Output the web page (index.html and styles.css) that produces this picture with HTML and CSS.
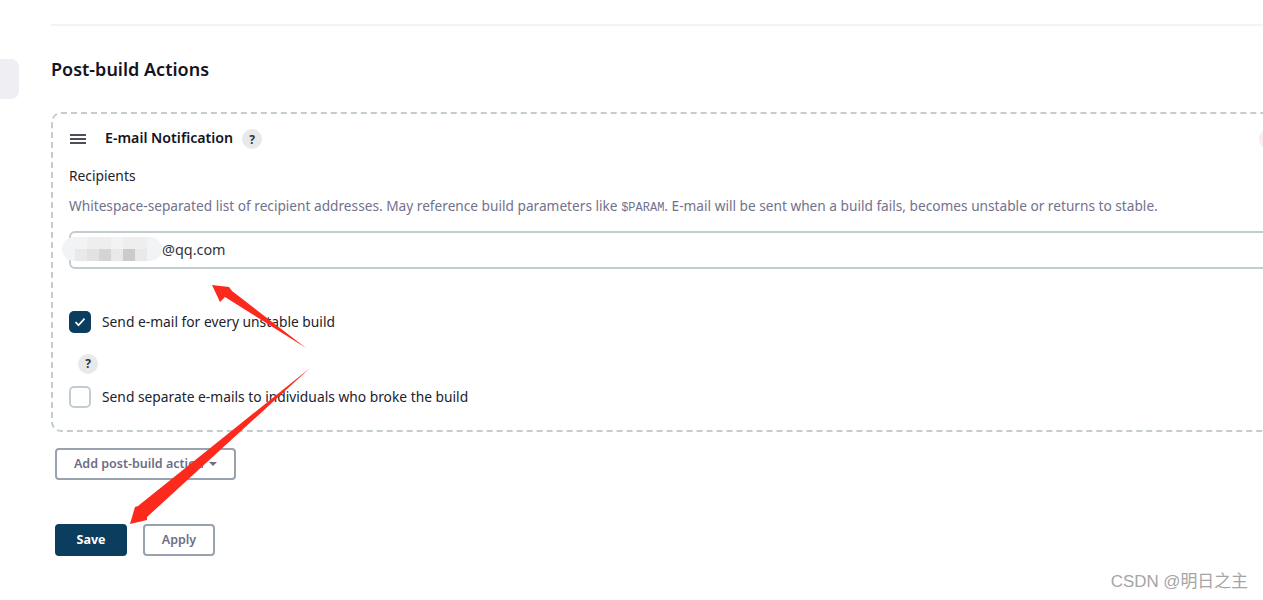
FILE: index.html
```html
<!DOCTYPE html>
<html lang="en">
<head>
<meta charset="utf-8">
<title>Post-build Actions</title>
<link rel="stylesheet" href="styles.css">
</head>
<body>
<div class="page">
  <aside class="side"><div class="side-tab"></div></aside>
  <main class="main">
    <hr class="rule">
    <h2 class="section-title">Post-build Actions</h2>
    <section class="card">
      <div class="card-head">
        <svg class="handle" width="16" height="10" viewBox="0 0 16 10"><path d="M0 1h16M0 5h16M0 9h16" stroke="#14141f" stroke-width="1.4" fill="none"/></svg>
        <span class="card-title">E-mail Notification</span>
        <span class="help">?</span>
        <span class="close-dot"></span>
      </div>
      <label class="field-label">Recipients</label>
      <p class="desc">Whitespace-separated list of recipient addresses. May reference build parameters like <code class="mono">$PARAM</code>. E-mail will be sent when a build fails, becomes unstable or returns to stable.</p>
      <div class="input-wrap">
        <div class="text-input">@qq.com</div>
        <div class="blur" aria-hidden="true">
          <i></i><i></i><i class="p0"></i><i class="p0"></i><i></i><i class="p0"></i><i class="p0"></i><i></i>
          <i></i><i class="p1"></i><i class="p2"></i><i class="p3"></i><i class="p1"></i><i class="p4"></i><i class="p1"></i><i></i>
        </div>
      </div>
      <div class="check-row first">
        <span class="box on"><svg width="12" height="10" viewBox="0 0 12 10"><path d="M1.5 5.2 4.5 8.2 10.5 1.6" fill="none" stroke="#fff" stroke-width="1.7"/></svg></span>
        <span>Send e-mail for every unstable build</span>
      </div>
      <div class="help-row"><span class="help">?</span></div>
      <div class="check-row">
        <span class="box"></span>
        <span>Send separate e-mails to individuals who broke the build</span>
      </div>
    </section>
    <button class="btn add"><span class="btn-text">Add post-build action <span class="caret"></span></span></button>
    <div class="actions">
      <button class="btn primary"><span class="btn-text">Save</span></button>
      <button class="btn apply"><span class="btn-text">Apply</span></button>
    </div>
  </main>
</div>
<svg class="arrows" width="1263" height="600" viewBox="0 0 1263 600" aria-hidden="true">
  <polygon fill="#fc2a1c" points="306,348 232,291 229,287 212,285 220,302 225,297"/>
  <polygon fill="#fc2a1c" points="310,368 147,517 147,520 130,524 135,507 138,506"/>
</svg>
<div class="watermark">CSDN @明日之主</div>
</body>
</html>
```
FILE: styles.css
```css
* { box-sizing: border-box; }
html, body { margin: 0; height: 600px; overflow: hidden; background: #fff; }
body { font-family: "Noto Sans", "Noto Sans CJK SC", sans-serif; color: #14141f; font-size: 14px; }
.page { display: flex; width: 1400px; height: 600px; }
.side { width: 51px; flex: none; padding-top: 59px; }
.side-tab { width: 19px; height: 40px; background: #eeeef3; border-radius: 0 8px 8px 0; }
.main { flex: 1; }
.rule { margin: 24px 0 0; border: 0; height: 2px; background: #f3f3f7; }
.section-title { margin: 31px 0 0; font-size: 18px; line-height: 25px; font-weight: 600; }
.card { margin-top: 30px; height: 320px; border: 2px dashed #c3ccd1; border-radius: 10px; padding: 0 16px; }
.card-head { display: flex; align-items: center; height: 50px; position: relative; }
.handle { margin-left: 1px; flex: none; }
.card-title { margin-left: 19px; font-weight: 600; font-size: 14.2px; line-height: 20px; margin-top: -2px; }
.help { display: inline-flex; align-items: center; justify-content: center; width: 20px; height: 20px; border-radius: 50%; background: #e9e9e9; font-size: 12px; font-weight: 700; color: #33333d; }
.card-head .help { margin-left: 9px; }
.close-dot { position: absolute; left: 1190px; top: 14px; width: 22px; height: 22px; border-radius: 50%; background: #fdecef; }
.field-label { display: block; margin-top: 2px; line-height: 20px; font-size: 13.8px; color: #22222c; }
.desc { margin: 10px 0 0; line-height: 20px; font-size: 13.68px; color: #72728c; white-space: nowrap; }
.mono { font-family: "Liberation Mono", monospace; font-size: 12px; }
.input-wrap { position: relative; margin-top: 13px; }
.text-input { height: 38px; width: 1400px; border: 2px solid #c3ccd1; border-radius: 6px; padding: 0 0 0 91px; line-height: 34px; font-size: 14.4px; color: #33333d; }
.blur { position: absolute; left: -7px; top: 6px; width: 100px; height: 24px; border-radius: 12px; background: #f2f3f4; display: grid; grid-template-columns: repeat(8, 12px); grid-auto-rows: 12px; overflow: hidden; padding-left: 1px; }
.blur .p0 { background: #eeeeee; }
.blur .p1 { background: #e9e9e9; }
.blur .p2 { background: #e2e2e2; }
.blur .p3 { background: #d4d4d4; }
.blur .p4 { background: #cbcbcb; }
.check-row { display: flex; align-items: center; gap: 11px; height: 22px; line-height: 22px; font-size: 13.8px; color: #22222c; }
.check-row.first { margin-top: 42px; }
.box { width: 22px; height: 22px; flex: none; border: 2px solid #c3ccd1; border-radius: 5px; background: #fff; display: flex; align-items: center; justify-content: center; }
.box.on { background: #0b3d5f; border-color: #0b3d5f; }
.help-row { margin: 20px 0 0 9px; height: 21px; display: flex; align-items: center; }
.help-row + .check-row { margin-top: 12px; }
.btn { display: block; font: 600 12.5px "Noto Sans", sans-serif; color: #6d6d87; background: #fff; border: 2px solid #98a3af; border-radius: 4px; padding: 0; height: 32px; }
.btn-text { display: block; margin-top: -2px; }
.add { margin: 16px 0 0 4px; width: 181px; }
.caret { display: inline-block; margin-left: 2px; vertical-align: 2px; border: 4px solid transparent; border-top-color: #6d6d87; border-bottom: 0; }
.actions { display: flex; gap: 16px; margin: 44px 0 0 4px; }
.primary { width: 72px; background: #0b3d5f; border-color: #0b3d5f; color: #fff; font-weight: 700; }
.apply { width: 72px; }
.arrows { position: absolute; left: 0; top: 0; pointer-events: none; }
.watermark { position: absolute; right: 15px; top: 570px; font: 16.9px/24px "Liberation Sans", "Noto Sans CJK SC", sans-serif; color: #a5a5a5; }
```
